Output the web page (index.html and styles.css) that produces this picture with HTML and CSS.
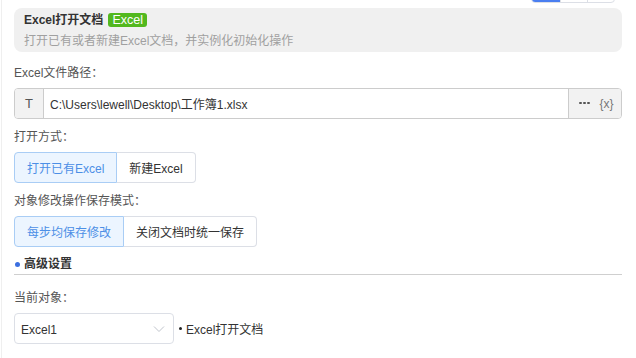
FILE: index.html
```html
<!DOCTYPE html>
<html lang="zh-CN">
<head>
<meta charset="utf-8">
<link rel="stylesheet" href="styles.css">
</head>
<body>
<div class="page">
  <div class="seg">
    <span class="seg-item active"></span>
    <span class="seg-item"></span>
    <span class="seg-item"></span>
  </div>
  <div class="header">
    <div class="title">Excel打开文档 <span class="badge">Excel</span></div>
    <div class="desc">打开已有或者新建Excel文档，并实例化初始化操作</div>
  </div>

  <div class="label first">Excel文件路径：</div>
  <div class="input">
    <span class="prefix">T</span>
    <span class="value">C:\Users\lewell\Desktop\工作簿1.xlsx</span>
    <span class="suffix"><span class="dots"><i></i><i></i><i></i></span><span class="var">{x}</span></span>
  </div>

  <div class="label">打开方式：</div>
  <div class="btn-group">
    <span class="btn active">打开已有Excel</span>
    <span class="btn">新建Excel</span>
  </div>

  <div class="label">对象修改操作保存模式：</div>
  <div class="btn-group">
    <span class="btn active">每步均保存修改</span>
    <span class="btn">关闭文档时统一保存</span>
  </div>

  <div class="section"><span class="dot"></span>高级设置</div>

  <div class="label after-section">当前对象：</div>
  <div class="row">
    <div class="select">
      <span>Excel1</span>
      <svg class="chev" width="12" height="8" viewBox="0 0 12 8"><path d="M1 1.5 L6 6.5 L11 1.5" fill="none" stroke="#c0c4cc" stroke-width="1"/></svg>
    </div>
    <span class="obj"><span class="small-dot"></span>Excel打开文档</span>
  </div>
</div>
</body>
</html>
```

FILE: styles.css
```css
html, body {
  margin: 0;
  padding: 0;
  background: #fff;
}
body {
  font-family: "Liberation Sans", Arial, "Noto Sans CJK SC", sans-serif;
  font-size: 12px;
  color: #555;
}
.page {
  position: relative;
  margin-left: 1px;
  border-left: 1px solid #efefef;
  padding: 8px 14px 0 12px;
  height: 350px;
}
.seg {
  position: absolute;
  top: -20px;
  left: 529px;
  display: flex;
  height: 23px;
  border: 1px solid #dcdfe6;
  border-radius: 4px;
  overflow: hidden;
  box-sizing: border-box;
}
.seg-item {
  width: 26px;
  border-left: 1px solid #dcdfe6;
}
.seg-item:first-child {
  border-left: none;
  width: 28px;
  background: #4a7ef0;
}
.header {
  background: #f0f0f0;
  border-radius: 8px;
  padding: 3px 10px 2px 10px;
  height: 39px;
}
.title {
  font-weight: bold;
  color: #333;
  line-height: 18px;
  display: flex;
  align-items: center;
  gap: 5px;
}
.badge {
  background: #52b81e;
  color: #fff;
  font-weight: normal;
  border-radius: 3px;
  padding: 0 4px;
  line-height: 14px;
  font-size: 12.5px;
}
.desc {
  color: #a0a0a0;
  line-height: 18px;
  margin-top: 3px;
}
.label {
  line-height: 20px;
  margin-top: 8px;
  margin-bottom: 5px;
  color: #555;
}
.label.first {
  margin-top: 11px;
}
.label.after-section {
  margin-top: 13px;
}
.input {
  display: flex;
  height: 31px;
  border: 1px solid #ccc;
  border-radius: 4px;
  box-sizing: border-box;
  overflow: hidden;
}
.prefix {
  width: 28px;
  background: #f2f2f2;
  border-right: 1px solid #ccc;
  display: flex;
  align-items: center;
  justify-content: center;
  color: #555;
  font-size: 13px;
}
.value {
  flex: 1;
  display: flex;
  align-items: center;
  padding-left: 6px;
  color: #333;
}
.suffix {
  width: 53px;
  background: #f2f2f2;
  border-left: 1px solid #ccc;
  display: flex;
  align-items: center;
  gap: 10px;
  padding-left: 10px;
  box-sizing: border-box;
}
.dots {
  display: flex;
  gap: 1.5px;
  margin-top: -1px;
}
.dots i {
  width: 2.5px;
  height: 2.5px;
  border-radius: 50%;
  background: #555;
}
.var {
  color: #777;
  font-size: 12px;
}
.btn-group {
  display: flex;
}
.btn {
  height: 31px;
  box-sizing: border-box;
  padding: 0 12px;
  display: flex;
  align-items: center;
  border: 1px solid #dcdfe6;
  color: #333;
  background: #fff;
}
.btn:first-child {
  border-radius: 4px 0 0 4px;
}
.btn:last-child {
  border-radius: 0 4px 4px 0;
  border-left: none;
}
.btn.active {
  background: #ecf5ff;
  border-color: #a9cdf5;
  color: #4c8fe6;
}
.section {
  margin-top: 7px;
  line-height: 20px;
  font-weight: bold;
  color: #333;
  border-bottom: 1px solid #cfcfcf;
  display: flex;
  align-items: center;
}
.dot {
  width: 5px;
  height: 5px;
  border-radius: 50%;
  background: #3b6fe0;
  margin-left: 1px;
  margin-right: 4px;
}
.row {
  display: flex;
  align-items: center;
}
.select {
  width: 160px;
  height: 31px;
  box-sizing: border-box;
  border: 1px solid #dcdfe6;
  border-radius: 4px;
  display: flex;
  align-items: center;
  justify-content: space-between;
  padding: 2px 8px 0 6px;
  color: #333;
}
.chev {
  margin-top: -2px;
}
.obj {
  display: flex;
  align-items: center;
  margin-left: 5px;
  color: #333;
}
.small-dot {
  width: 3px;
  height: 3px;
  border-radius: 50%;
  background: #222;
  margin-right: 4px;
}
```
